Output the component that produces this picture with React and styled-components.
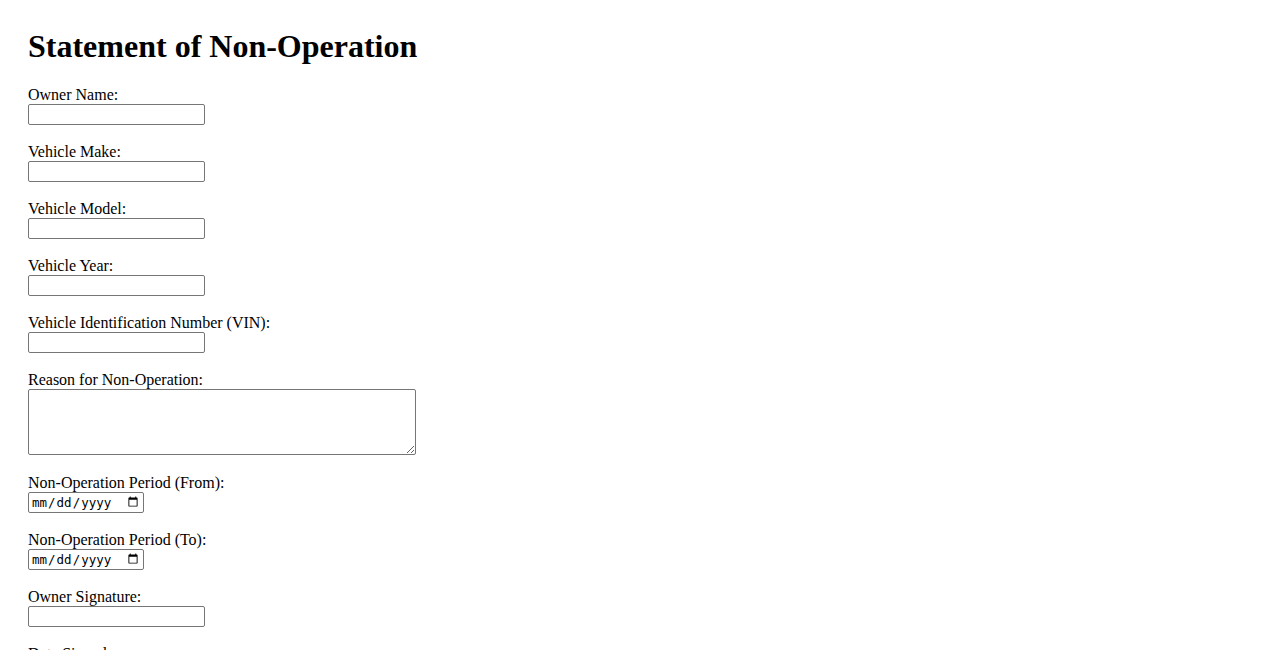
import React from "react";
import styled, { createGlobalStyle } from "styled-components";

const Global = createGlobalStyle`
  html, body { margin: 0; padding: 0; background: #fff; }
  body {
    font-family: "Liberation Serif", "Times New Roman", serif;
    font-size: 16px;
    color: #000;
  }
`;

const Page = styled.div`
  padding: 28px;
`;

const Title = styled.h1`
  margin: 0 0 21px;
  font-size: 32px;
  font-weight: bold;
  line-height: 37px;
`;

const Form = styled.form`
  display: flex;
  flex-direction: column;
  align-items: flex-start;
`;

const Field = styled.div`
  display: flex;
  flex-direction: column;
  align-items: flex-start;
  margin-bottom: ${(p) => p.$gap || 18}px;
`;

const Label = styled.label`
  display: block;
  line-height: 18px;
`;

const TextInput = styled.input`
  box-sizing: border-box;
  width: 177px;
  height: 21px;
  margin: 0;
  padding: 1px 2px;
  border: 1px solid #767676;
  border-radius: 2px;
  background: #fff;
  font-family: "DejaVu Sans", sans-serif;
  font-size: 13.33px;
`;

const DateInput = styled.input`
  box-sizing: border-box;
  width: 116px;
  height: 21px;
  margin: 0;
  padding: 1px 2px;
  border: 1px solid #767676;
  border-radius: 2px;
  background: #fff;
  font-family: "DejaVu Sans Mono", monospace;
  font-size: 12.5px;
`;

const TextArea = styled.textarea`
  box-sizing: border-box;
  width: 388px;
  height: 66px;
  margin: 0;
  padding: 2px;
  border: 1px solid #767676;
  border-radius: 2px;
  font-family: "DejaVu Sans Mono", monospace;
  font-size: 13.33px;
`;

const Submit = styled.button`
  font-family: "DejaVu Sans", sans-serif;
  font-size: 13.33px;
  padding: 1px 6px;
`;

const textFields = [
  "Owner Name:",
  "Vehicle Make:",
  "Vehicle Model:",
  "Vehicle Year:",
  "Vehicle Identification Number (VIN):",
];

export default function App() {
  return (
    <>
      <Global />
      <Page>
        <Title>Statement of Non-Operation</Title>
        <Form onSubmit={(e) => e.preventDefault()}>
          {textFields.map((t) => (
            <Field key={t}>
              <Label>{t}</Label>
              <TextInput type="text" />
            </Field>
          ))}
          <Field $gap={19}>
            <Label>Reason for Non-Operation:</Label>
            <TextArea />
          </Field>
          <Field>
            <Label>Non-Operation Period (From):</Label>
            <DateInput type="date" />
          </Field>
          <Field>
            <Label>Non-Operation Period (To):</Label>
            <DateInput type="date" />
          </Field>
          <Field>
            <Label>Owner Signature:</Label>
            <TextInput type="text" />
          </Field>
          <Field>
            <Label>Date Signed:</Label>
            <DateInput type="date" />
          </Field>
          <Submit type="submit">Submit</Submit>
        </Form>
      </Page>
    </>
  );
}
